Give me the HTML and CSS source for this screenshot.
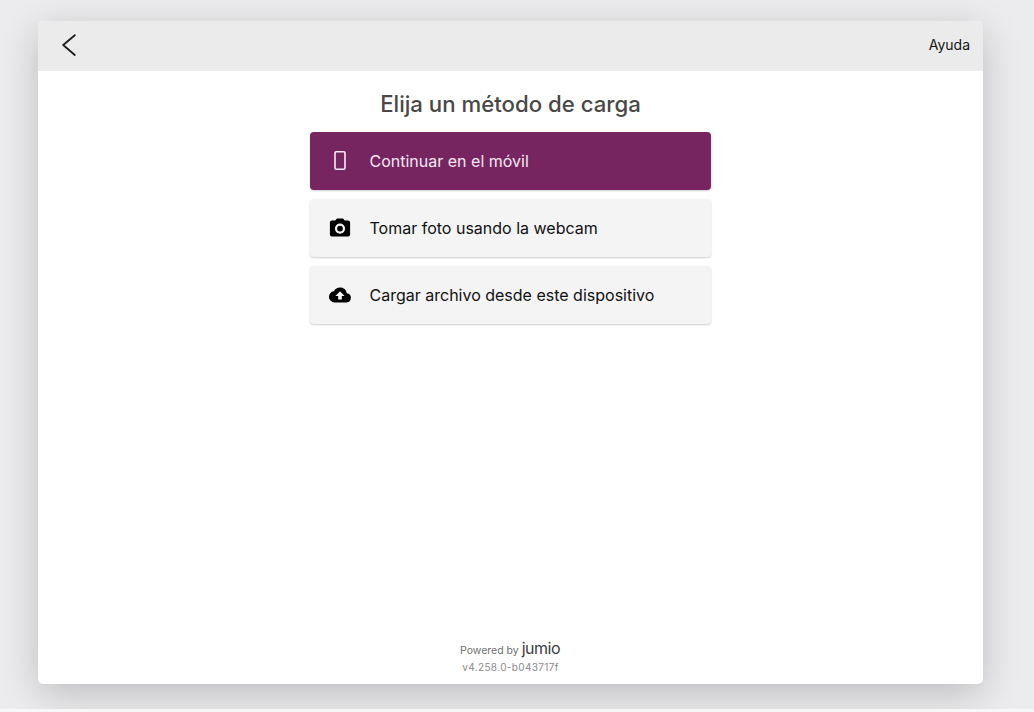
FILE: index.html
```html
<!DOCTYPE html>
<html lang="es">
<head>
    <meta charset="UTF-8">
    <meta name="viewport" content="width=device-width, initial-scale=1.0">
    <title>Elija un método de carga</title>
    <link rel="stylesheet" href="styles.css">
</head>
<body>
    <div class="page">
        <main class="card">
            <header class="topbar">
                <button class="back" aria-label="Volver">
                    <svg width="16" height="24" viewBox="0 0 16 24" fill="none" stroke="#1c1c1e" stroke-width="1.8" stroke-linecap="round" stroke-linejoin="round">
                        <path d="M14.800 1.200 3.200 11 14.800 21"/>
                    </svg>
                </button>
                <a class="help" href="#">Ayuda</a>
            </header>

            <section class="content">
                <h1>Elija un método de carga</h1>
                <div class="options">
                    <button class="option option-primary">
                        <span class="option-icon">
                            <svg width="24" height="24" viewBox="0 0 24 24" fill="none" stroke="#f6eef4" stroke-width="1.6">
                                <rect x="7" y="2.800" width="10" height="17.500" rx="1.200"/>
                            </svg>
                        </span>
                        Continuar en el móvil
                    </button>
                    <button class="option">
                        <span class="option-icon">
                            <svg width="24" height="24" viewBox="0 0 24 24">
                                <path fill="#000" fill-rule="evenodd" d="M9 2.500 7.200 4.600H3.900C2.800 4.600 1.900 5.500 1.900 6.600v12c0 1.100.9 2 2 2h16.200c1.100 0 2-.9 2-2v-12c0-1.100-.9-2-2-2h-3.300L15 2.500H9ZM12 17.700a5.100 5.100 0 1 1 0-10.200 5.100 5.100 0 0 1 0 10.200Zm0-2.200a2.900 2.900 0 1 0 0-5.800 2.900 2.900 0 0 0 0 5.800Z"/>
                            </svg>
                        </span>
                        Tomar foto usando la webcam
                    </button>
                    <button class="option">
                        <span class="option-icon">
                            <svg width="24" height="24" viewBox="-1 -1 26 26">
                                <path fill="#000" d="M19.350 10.040A7.490 7.490 0 0 0 12 4a7.500 7.500 0 0 0-6.650 4.040A6 6 0 0 0 6 20h13a5 5 0 0 0 .35-9.960ZM14 13v4h-4v-4H7l5-5 5 5h-3Z"/>
                            </svg>
                        </span>
                        Cargar archivo desde este dispositivo
                    </button>
                </div>
            </section>

            <footer class="powered">
                <div class="powered-line">Powered by <span class="brand">jumio</span></div>
                <div class="version">v4.258.0-b043717f</div>
            </footer>
        </main>
    </div>
</body>
</html>
```

FILE: styles.css
```css
* {
    box-sizing: border-box;
}

html, body {
    height: 100%;
}

body {
    margin: 0;
    background: #f7f7f7;
    font-family: "Inter", "Liberation Sans", sans-serif;
    color: #1c1c1e;
    overflow: hidden;
}

.page {
    height: 709px;
    padding: 21px 51px 25px 38px;
    background: #ececee;
    overflow: hidden;
}

.card {
    display: flex;
    flex-direction: column;
    height: 100%;
    background: #ffffff;
    border-radius: 5px;
    overflow: hidden;
    box-shadow: 0 10px 38px rgba(0, 0, 0, 0.2);
}

.topbar {
    display: flex;
    align-items: center;
    justify-content: space-between;
    flex: 0 0 50px;
    padding: 0 13px 0 22px;
    background: #ebebeb;
}

.back {
    display: flex;
    padding: 0;
    border: none;
    background: none;
}

.help {
    margin-bottom: 3px;
    font-size: 14px;
    color: #141416;
    text-decoration: none;
}

.content {
    flex: 1;
    display: flex;
    flex-direction: column;
    align-items: center;
}

h1 {
    margin: 18px 0 14px;
    font-size: 22.200px;
    line-height: 29px;
    font-weight: 500;
    color: #484848;
}

.options {
    display: flex;
    flex-direction: column;
    gap: 9px;
    width: 401px;
    margin-right: 1px;
}

.option {
    display: flex;
    align-items: center;
    height: 58px;
    padding: 0 0 0 18px;
    border: none;
    border-radius: 4px;
    background: #f4f4f4;
    box-shadow: 0 1px 2px rgba(0, 0, 0, 0.2);
    font-family: inherit;
    font-size: 16px;
    color: #111111;
    text-align: left;
}

.option-primary {
    background: #772560;
    color: #f3e9f0;
}

.option-icon {
    display: flex;
    margin-right: 18px;
}

.powered {
    padding-bottom: 10px;
    text-align: center;
}

.powered-line {
    display: flex;
    align-items: baseline;
    justify-content: center;
    gap: 3px;
    margin-right: 1px;
    font-size: 10.500px;
    line-height: 17px;
    color: #6f6f6f;
}

.brand {
    font-size: 16px;
    font-weight: 400;
    letter-spacing: -0.5px;
    color: #3c3c3c;
}

.version {
    margin-top: 1px;
    font-size: 10px;
    line-height: 14px;
    letter-spacing: 0.35px;
    color: #8a8a8a;
}
```
